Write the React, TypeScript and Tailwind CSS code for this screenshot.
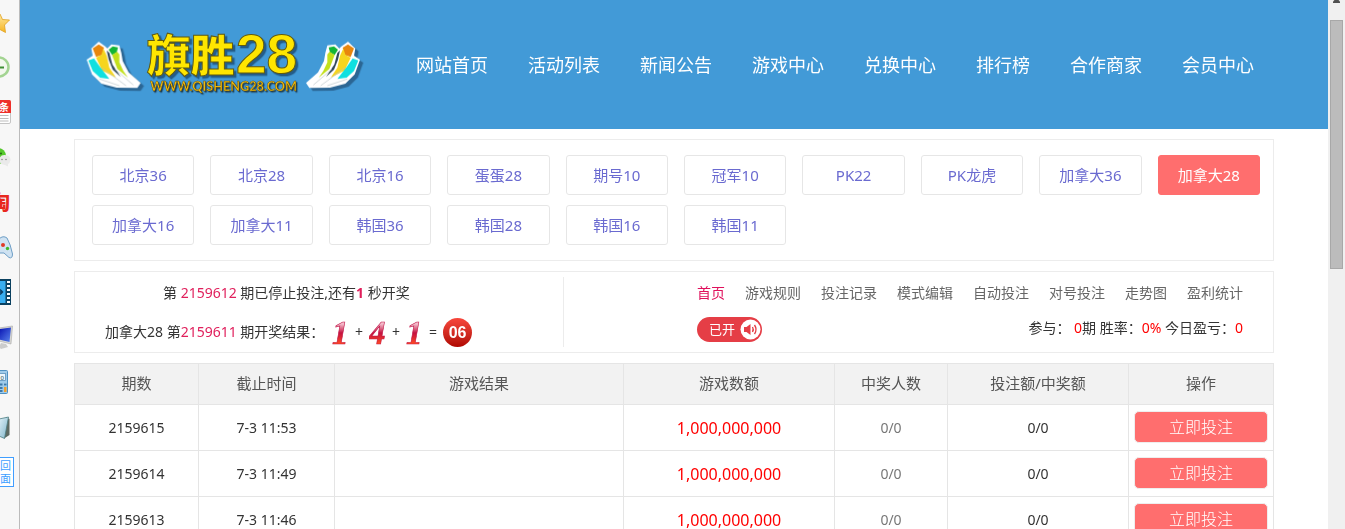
const navLinks = ["网站首页", "活动列表", "新闻公告", "游戏中心", "兑换中心", "排行榜", "合作商家", "会员中心"];

const games = [
  "北京36", "北京28", "北京16", "蛋蛋28", "期号10", "冠军10", "PK22", "PK龙虎",
  "加拿大36", "加拿大28", "加拿大16", "加拿大11", "韩国36", "韩国28", "韩国16", "韩国11",
];

const gameLinks = ["首页", "游戏规则", "投注记录", "模式编辑", "自动投注", "对号投注", "走势图", "盈利统计"];

const rows = [
  { id: "2159615", time: "7-3 11:53" },
  { id: "2159614", time: "7-3 11:49" },
  { id: "2159613", time: "7-3 11:46" },
];

function SideIcon({ children }: { children: React.ReactNode }) {
  return (
    <svg className="block h-[45px] w-[19px] shrink-0" viewBox="0 0 19 45">
      {children}
    </svg>
  );
}

function Sidebar() {
  return (
    <aside className="flex w-5 shrink-0 flex-col overflow-hidden border-r border-[#bbb] bg-[#f7f7f7]">
      <svg width="0" height="0" className="absolute">
        <defs>
          <linearGradient id="gold" x1="0" y1="0" x2="0" y2="1">
            <stop offset="0" stopColor="#ffe9a0" />
            <stop offset="1" stopColor="#f5b421" />
          </linearGradient>
          <linearGradient id="screen" x1="0" y1="0" x2="1" y2="1">
            <stop offset="0" stopColor="#0610b0" />
            <stop offset="1" stopColor="#5b86ee" />
          </linearGradient>
          <linearGradient id="sky" x1="0" y1="0" x2="1" y2="1">
            <stop offset="0" stopColor="#dff0f8" />
            <stop offset="1" stopColor="#7fb4c8" />
          </linearGradient>
        </defs>
      </svg>
      <SideIcon>
        <path d="M0 14 L2.500 19.500 L9.500 20 L4.500 25 L5.500 32.500 L-1 29 L-7 32 V20 Z" fill="url(#gold)" stroke="#e0a01c" strokeWidth="0.8" />
      </SideIcon>
      <SideIcon>
        <circle cx="-1" cy="22" r="9.500" fill="#f2f8ee" stroke="#a3d492" strokeWidth="2.500" />
        <path d="M-2 22.500 H4" stroke="#3f8f35" strokeWidth="2" />
      </SideIcon>
      <SideIcon>
        <rect x="-8" y="11" width="18.500" height="22.500" rx="1.500" fill="#fff" stroke="#c4c4c4" />
        <path d="M-8 10 H9.500 Q11 10 11 12 V23 H-8 Z" fill="#ee2f2a" />
        <text x="-1" y="21" fontSize="10" fontWeight="700" fill="#fff">条</text>
        <path d="M0 25.500 H8.500 M0 28.500 H8.500 M0 31 H8.500" stroke="#bdbdbd" />
      </SideIcon>
      <SideIcon>
        <circle cx="-2" cy="21" r="8" fill="#55c92c" />
        <circle cx="1" cy="18.500" r="1" fill="#246b10" />
        <path d="M-1 25 Q0 19.500 5 20 Q10.500 20.500 10.500 25 Q10 28 8 29 V31.500 L5 30 Q0 30 -1 25" fill="#eaeaea" />
        <circle cx="2" cy="24.500" r="0.700" fill="#777" />
        <circle cx="6" cy="24.500" r="0.700" fill="#777" />
      </SideIcon>
      <SideIcon>
        <text x="-10" y="30" fontSize="20" fontWeight="900" fill="#e8281f">淘</text>
      </SideIcon>
      <SideIcon>
        <path d="M-1 14 Q3 10 7 13 Q10.500 19 12.500 29 Q12.500 34 9 32.500 L4 28 H-1 Z" fill="#cfe2f2" stroke="#6f9fc6" />
        <circle cx="3" cy="20" r="2" fill="#e03a26" />
        <circle cx="7.500" cy="23.500" r="1.700" fill="#3fba2a" />
      </SideIcon>
      <SideIcon>
        <path d="M-1 9 H11 V35 H-1 Z" fill="#0b4160" />
        <path d="M-1 11 H5.500 V33 H-1 Z" fill="#39aef0" />
        <path d="M8.500 11 V34" stroke="#fff" strokeWidth="3" strokeDasharray="2 2" />
        <path d="M-1 22 H2 M0 19.500 L2.500 22 L0 24.500" fill="none" stroke="#0e4168" strokeWidth="1.500" />
      </SideIcon>
      <SideIcon>
        <path d="M-1 13 L12.500 11 L11 29 L-1 26 Z" fill="#d8d8d4" stroke="#aaa" strokeWidth="0.600" />
        <path d="M-1 14 L11 12.500 L9.500 27 L-1 24.500 Z" fill="url(#screen)" />
        <path d="M1 28 L6 29 L8 32 L1 34 L-1 32 Z" fill="#ccc" />
      </SideIcon>
      <SideIcon>
        <rect x="-8" y="10.500" width="15.500" height="23" rx="1" fill="#9fcbea" stroke="#4f91c2" />
        <rect x="-5" y="13.500" width="10.500" height="7" fill="#eef7fd" stroke="#4d86b2" strokeWidth="0.700" />
        <text x="0.500" y="19.500" fontSize="6" fill="#244">0</text>
        <path d="M0 24.500 H2.500 M0 28 H2.500 M0 31 H2.500" stroke="#3d79a9" strokeWidth="1.800" />
        <path d="M4 24.500 H6.500" stroke="#3d79a9" strokeWidth="1.800" />
        <path d="M4 29.500 H6.500" stroke="#f0a030" strokeWidth="5" />
      </SideIcon>
      <SideIcon>
        <path d="M6 12 L9.500 14 V30 L4 33.500 Z" fill="#5e6a62" />
        <path d="M-1 14 L8.500 12 L4.500 33.500 L-1 31 Z" fill="url(#sky)" stroke="#4d7d83" strokeWidth="0.800" />
      </SideIcon>
      <SideIcon>
        <rect x="-8" y="7.500" width="21.500" height="29" fill="#fff" stroke="#409eff" />
        <text x="0" y="20" fontSize="11" fill="#409eff">回</text>
        <text x="0" y="33" fontSize="11" fill="#409eff">面</text>
      </SideIcon>
    </aside>
  );
}

function Wing() {
  return (
    <>
      <path d="M34 70 L56 50 L76 64 L82 70 L94 58 L118 61 L124 84 L128 108 L146 142 L182 174 L172 189 L110 188 L64 176 L36 148 L20 104 L38 92 Z" fill="#fff" strokeLinejoin="round" />
      <path d="M38 70 L56 58 L72 68 L66 90 L48 96 Z" fill="#e8860c" />
      <path d="M70 70 L80 92 L88 128 L108 158 L66 136 L48 98 L64 90 Z" fill="#f6d51e" />
      <path d="M86 74 L98 64 L114 67 L110 82 L96 90 Z" fill="#12b536" />
      <path d="M96 90 L111 80 L118 88 L118 112 L130 138 L144 158 L112 132 Z" fill="#c3e01c" />
      <path d="M25 106 L42 100 L60 126 L88 162 L60 158 L38 138 Z" fill="#0fe0e0" />
      <path d="M80 76 L88 84 L97 118 L122 156 L98 134 L86 104 Z" fill="#31485a" />
      <path d="M66 128 Q94 150 138 182 M58 162 L118 182 M104 132 L160 180" fill="none" stroke="#b9c4c8" strokeWidth="2" />
    </>
  );
}

function Logo() {
  return (
    <svg className="ml-1.5 h-20 w-[300px] shrink-0" viewBox="0 0 900 240" role="img" aria-label="旗胜28">
      <g className="[filter:drop-shadow(10px_9px_2px_#2b6694)]">
        <Wing />
        <g transform="translate(860 0) scale(-1 1)">
          <Wing />
        </g>
      </g>
      <g className="[filter:drop-shadow(7px_7px_1px_#245c88)]" fontWeight="900" fill="#ffe600" stroke="#5f5a12" strokeWidth="3">
        <text x="200" y="140" fontSize="132" fontFamily="'Noto Sans CJK SC', sans-serif">旗胜</text>
        <text x="468" y="143" fontSize="165" fontFamily="'Liberation Sans', sans-serif">28</text>
      </g>
      <text className="[filter:drop-shadow(4px_4px_1px_#1d3c52)]" x="211" y="198" fontFamily="Lato, sans-serif" fontWeight="700" fontSize="38" fill="#f0b90c" stroke="#4a3d0c" strokeWidth="1">
        WWW.QISHENG28.COM
      </text>
    </svg>
  );
}

function Digit({ value }: { value: string }) {
  return (
    <svg className="h-7 w-[17px]" viewBox="0 0 17 28">
      <defs>
        <linearGradient id="digit" x1="0" y1="0" x2="0" y2="1">
          <stop offset="0.250" stopColor="#f3bccb" />
          <stop offset="0.500" stopColor="#c4103f" />
          <stop offset="0.800" stopColor="#ff4a22" />
        </linearGradient>
      </defs>
      <text x="0" y="26" fontFamily="'Liberation Serif', serif" fontStyle="italic" fontWeight="700" fontSize="33" fill="url(#digit)" stroke="#c2184a" strokeWidth="0.600">
        {value}
      </text>
    </svg>
  );
}

function DrawStatus() {
  return (
    <section className="mt-2.5 flex border border-[#ececec] py-[5px] text-sm text-[#333]">
      <div className="h-[70px] w-[489px] shrink-0 border-r border-[#ececec]">
        <p className="pl-[88px] pt-1 leading-6">
          第 <span className="text-[#e0205c]">2159612</span> 期已停止投注,还有<b className="text-[#e0205c]">1</b> 秒开奖
        </p>
        <div className="flex items-center pl-[30px] pt-3 leading-[30px]">
          <p className="w-[227px] whitespace-nowrap">
            加拿大28 第<span className="text-[#e0205c]">2159611</span> 期开奖结果：
          </p>
          <div className="flex items-center gap-1.5">
            <Digit value="1" />
            <span>+</span>
            <Digit value="4" />
            <span>+</span>
            <Digit value="1" />
            <span>=</span>
            <span className="size-[29px] rounded-full bg-linear-to-b from-[#f8473c] to-[#b00500] text-center font-['Liberation_Sans',sans-serif] text-base font-bold leading-[29px] text-white">
              06
            </span>
          </div>
        </div>
      </div>

      <div className="flex-1 pl-[133px] pr-[30px]">
        <nav className="flex justify-between pt-1 leading-6">
          {gameLinks.map((item, i) => (
            <a key={item} href="#" className={i === 0 ? "text-[#e0105c]" : "text-[#666]"}>
              {item}
            </a>
          ))}
        </nav>
        <div className="flex justify-between pt-3">
          <button className="flex h-[25px] w-[65px] items-center justify-between rounded-full bg-[#e53e46] pl-3 pr-px text-[13px] text-white">
            已开
            <svg className="size-[21px]" viewBox="0 0 21 21">
              <circle cx="10.500" cy="10.500" r="10" fill="#fff" />
              <path d="M4 8 H6.500 L10.500 5 V16 L6.500 13 H4 Z" fill="#e53e46" />
              <path d="M12.500 8 Q14 10.500 12.500 13 M14.500 6 Q17.500 10.500 14.500 15" fill="none" stroke="#e53e46" strokeWidth="1.400" />
            </svg>
          </button>
          <p className="leading-[22px]">
            参与： <span className="text-[#f00]">0</span>期 胜率：<span className="text-[#f00]">0%</span> 今日盈亏：<span className="text-[#f00]">0</span>
          </p>
        </div>
      </div>
    </section>
  );
}

function IssueTable() {
  const cell = "border border-[#e5e5e5] p-0";

  return (
    <table className="mt-2.5 w-full table-fixed border-collapse text-center text-sm text-[#333]">
      <colgroup>
        <col className="w-[124px]" />
        <col className="w-[136px]" />
        <col />
        <col className="w-[211px]" />
        <col className="w-[113px]" />
        <col className="w-[181px]" />
        <col className="w-[145px]" />
      </colgroup>
      <thead>
        <tr className="h-[41px] bg-[#f2f2f2] text-[15px] text-[#555]">
          {["期数", "截止时间", "游戏结果", "游戏数额", "中奖人数", "投注额/中奖额", "操作"].map((title) => (
            <th key={title} className={`${cell} font-normal`}>{title}</th>
          ))}
        </tr>
      </thead>
      <tbody>
        {rows.map((row) => (
          <tr key={row.id} className="h-[46px]">
            <td className={cell}>{row.id}</td>
            <td className={cell}>{row.time}</td>
            <td className={cell}></td>
            <td className={`${cell} text-base text-[#f00]`}>1,000,000,000</td>
            <td className={`${cell} text-[#777]`}>0/0</td>
            <td className={cell}>0/0</td>
            <td className="border border-[#e5e5e5] px-[5px] pb-0.5 pt-0">
              <button className="block h-8 w-full rounded-[5px] border border-[#eee] bg-[#ff6e6e] text-base font-light leading-[30px] text-white">
                立即投注
              </button>
            </td>
          </tr>
        ))}
      </tbody>
    </table>
  );
}

export default function App() {
  return (
    <div className="flex h-screen overflow-hidden bg-white font-['Noto_Sans','Noto_Sans_CJK_SC',sans-serif]">
      <Sidebar />

      <div className="min-w-0 flex-1">
        <header className="bg-[#429ad7]">
          <div className="mx-auto flex h-[129px] max-w-[1200px] items-center justify-between">
            <Logo />
            <nav className="flex text-lg text-white">
              {navLinks.map((item) => (
                <a key={item} href="#" className="whitespace-nowrap px-5">
                  {item}
                </a>
              ))}
            </nav>
          </div>
        </header>

        <main className="mx-auto max-w-[1200px] pt-2.5">
          <section className="grid grid-cols-10 gap-x-4 gap-y-2.5 border border-[#ececec] py-[15px] pl-[17px] pr-[13px]">
            {games.map((game) => (
              <a
                key={game}
                href="#"
                className={`h-10 rounded-[3px] border text-center text-[15px] leading-[38px] ${
                  game === "加拿大28" ? "border-[#ff6e6e] bg-[#ff6e6e] text-white" : "border-[#e6e6e6] text-[#6a6ad0]"
                }`}
              >
                {game}
              </a>
            ))}
          </section>
          <DrawStatus />
          <IssueTable />
        </main>
      </div>

      {/* scroll track */}
      <div className="flex w-[17px] shrink-0 flex-col items-center bg-[#f0f0f0]">
        <svg className="h-5 w-[13px] shrink-0" viewBox="0 0 13 20">
          <path d="M6.500 -2 L10 1.500 V3 H3 V1.500 Z" fill="#505050" />
        </svg>
        <div className="h-[249px] w-[13px] border border-[#a8a8a8] bg-[#bcbcbc]" />
      </div>
    </div>
  );
}
